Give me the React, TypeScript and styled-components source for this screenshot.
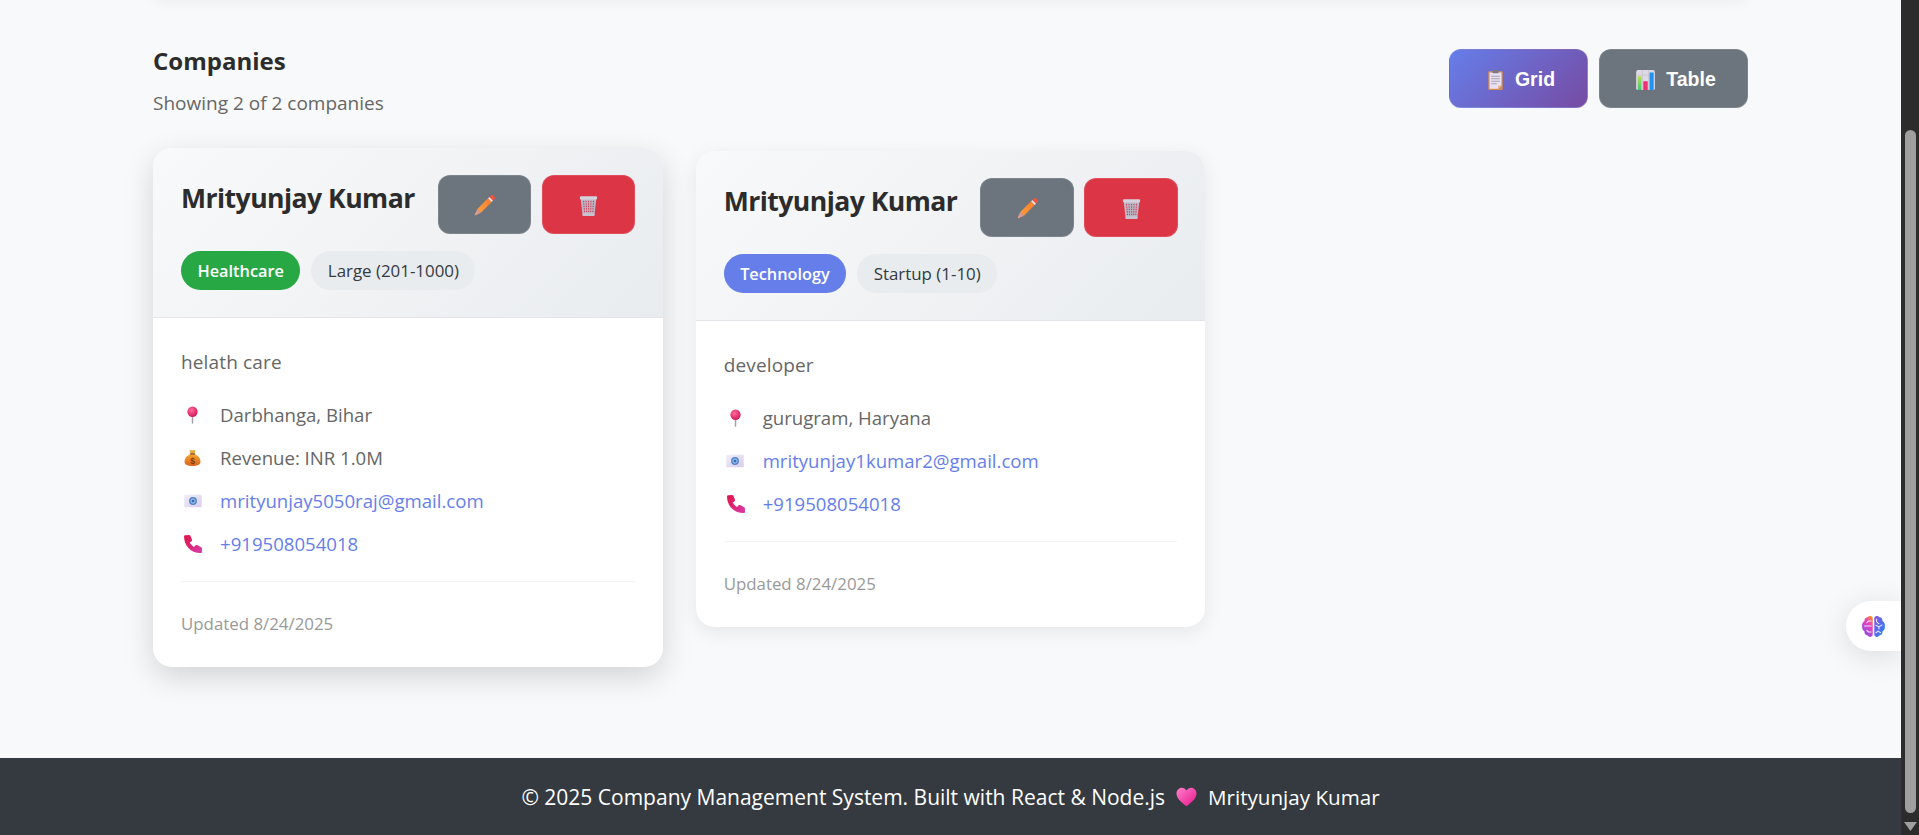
import React from "react";
import styled, { createGlobalStyle } from "styled-components";

const Global = createGlobalStyle`
  html, body { margin: 0; padding: 0; height: 100%; overflow: hidden; }
  body { font-family: "Open Sans", "Noto Sans", "Liberation Sans", sans-serif; background: #f8f9fa; }
  * { box-sizing: border-box; }
`;

const Page = styled.div`
  display: flex;
  height: 835px;
  width: 1919px;
`;
const Main = styled.div`
  position: relative;
  flex: 1;
  display: flex;
  flex-direction: column;
  min-width: 0;
  overflow: hidden;
`;
const Content = styled.main`
  flex: 1;
  padding: 0 153px;
`;
const TopPanelEdge = styled.div`
  height: 20px;
  margin-top: -20px;
  border-radius: 12px;
  background: #f3f4f5;
  box-shadow: 0 2px 14px rgba(0, 0, 0, 0.05);
`;
const SectionHeader = styled.header`
  display: flex;
  justify-content: space-between;
  align-items: flex-start;
  padding-top: 44px;
  margin-bottom: 35px;
`;
const Heading = styled.h2`
  margin: 0;
  font-size: 24px;
  line-height: 34px;
  font-weight: 700;
  color: #2c2c2c;
`;
const Subheading = styled.p`
  margin: 12px 0 0;
  font-size: 19px;
  line-height: 26px;
  color: #666;
`;
const ViewToggle = styled.div`
  display: flex;
  gap: 11px;
  margin-top: 5px;
`;
const ViewButton = styled.button<{ $active?: boolean }>`
  display: inline-flex;
  align-items: center;
  justify-content: center;
  gap: ${(p) => (p.$active ? "12px" : "11px")};
  height: 59px;
  width: ${(p) => (p.$active ? "139px" : "149px")};
  padding: 2px 0 0 ${(p) => (p.$active ? "6px" : "5px")};
  border-radius: 12px;
  border: 1px solid rgba(255, 255, 255, 0.12);
  background: ${(p) => (p.$active ? "linear-gradient(135deg, #667eea 0%, #764ba2 100%)" : "#6c757d")};
  color: #fff;
  font-family: "Liberation Sans", Arial, sans-serif;
  font-size: 19.5px;
  font-weight: 700;
`;
const CardGrid = styled.div`
  display: grid;
  grid-template-columns: repeat(3, 1fr);
  gap: 33px;
  align-items: start;
`;
const Card = styled.article<{ $lifted?: boolean }>`
  background: #fff;
  border-radius: 19px;
  overflow: hidden;
  transform: ${(p) => (p.$lifted ? "translateY(-3px)" : "none")};
  box-shadow: ${(p) => (p.$lifted ? "0 10px 30px rgba(0,0,0,0.15)" : "0 5px 20px rgba(0,0,0,0.08)")};
`;
const CardHeader = styled.div`
  padding: 27px 27.5px 27px 28px;
  background: linear-gradient(135deg, #f8f9fa 0%, #e9ecef 100%);
  border-bottom: 1px solid #e3e5e8;
`;
const TitleRow = styled.div`
  display: flex;
  justify-content: space-between;
  align-items: flex-start;
`;
const CardTitle = styled.h3`
  margin: 0;
  font-size: 26.6px;
  line-height: 46px;
  font-weight: 700;
  color: #2c2c2c;
  letter-spacing: -0.55px;
  white-space: nowrap;
`;
const Actions = styled.div`
  display: flex;
  gap: 10.5px;
`;
const IconButton = styled.button<{ $danger?: boolean }>`
  display: flex;
  align-items: center;
  justify-content: center;
  width: 93.5px;
  height: 59px;
  padding: 2px 0 0;
  border-radius: 12px;
  border: 1px solid rgba(255, 255, 255, 0.12);
  background: ${(p) => (p.$danger ? "#dc3545" : "#6c757d")};
`;
const Badges = styled.div`
  display: flex;
  gap: 11px;
  margin-top: 17px;
`;
const Badge = styled.span<{ $primary?: boolean; $bg: string }>`
  display: inline-flex;
  align-items: center;
  height: 39px;
  padding: 0 16.5px;
  border-radius: 20px;
  background: ${(p) => p.$bg};
  color: ${(p) => (p.$primary ? "#fff" : "#343a40")};
  font-size: ${(p) => (p.$primary ? "16.3px" : "16.9px")};
  font-weight: ${(p) => (p.$primary ? 600 : 400)};
  white-space: nowrap;
`;
const CardBody = styled.div`
  padding: 27px 28px 30px;
`;
const Description = styled.p`
  margin: 0 0 21px;
  font-size: 19px;
  line-height: 34px;
  color: #666;
  letter-spacing: 0.15px;
`;
const InfoList = styled.ul`
  list-style: none;
  margin: 0;
  padding: 0;
  display: flex;
  flex-direction: column;
  gap: 14px;
`;
const InfoRow = styled.li`
  display: flex;
  align-items: center;
  height: 29px;
  font-size: 18.6px;
  color: #666;
`;
const InfoIcon = styled.span`
  display: flex;
  justify-content: center;
  align-items: center;
  width: 39px;
  padding-right: 16px;
  flex: none;
`;
const InfoLink = styled.a`
  color: #667eea;
  text-decoration: none;
`;
const CardFooter = styled.div`
  margin-top: 23px;
  padding-top: 29px;
  border-top: 1px solid #f3f4f5;
  font-size: 16.85px;
  line-height: 26px;
  color: #999;
`;
const Footer = styled.footer`
  flex: none;
  height: 77px;
  display: flex;
  align-items: center;
  justify-content: center;
  gap: 10px;
  background: #343a40;
  color: #fff;
  font-size: 21px;
`;
const FooterName = styled.span`
  font-size: 20.6px;
`;
const FloatingTab = styled.div`
  position: absolute;
  right: 0;
  top: 601px;
  width: 55px;
  height: 50px;
  display: flex;
  align-items: center;
  padding-left: 15px;
  background: #fff;
  border-radius: 25px 0 0 25px;
  box-shadow: 0 5px 30px rgba(0, 0, 0, 0.12);
`;
const ScrollTrack = styled.div`
  position: relative;
  flex: none;
  width: 18px;
  height: 100%;
  background: #2c2c2c;
  display: flex;
  flex-direction: column;
  align-items: center;
  padding-top: 130px;
`;
const ScrollThumb = styled.div`
  width: 11px;
  height: 683px;
  background: #9f9f9f;
  border-radius: 6px;
`;
const ScrollArrow = styled.svg`
  margin-top: 9px;
`;

const PinIcon = () => (
  <svg width="13" height="18" viewBox="0 0 24 32">
    <defs>
      <radialGradient id="pinG" cx="0.4" cy="0.35" r="0.7">
        <stop offset="0" stopColor="#ff6c96" />
        <stop offset="1" stopColor="#d3125c" />
      </radialGradient>
    </defs>
    <rect x="10.6" y="14" width="2.8" height="18" rx="1.2" fill="#a6a2ac" />
    <circle cx="12" cy="10" r="9.5" fill="url(#pinG)" />
  </svg>
);

const BagIcon = () => (
  <svg width="17" height="18" viewBox="0 0 32 32">
    <defs>
      <linearGradient id="bagG" x1="0" y1="0" x2="0" y2="1">
        <stop offset="0" stopColor="#f9a62c" />
        <stop offset="1" stopColor="#d8621d" />
      </linearGradient>
    </defs>
    <path d="M11 9C5 12 1 17 1 22.500c0 6.500 7 8.500 15 8.500s15-2 15-8.500C31 17 27 12 21 9Z" fill="url(#bagG)" />
    <path d="M10 1.500h12l-2.500 6.500h-7Z" fill="#eaa43c" />
    <rect x="11" y="7" width="10" height="2.800" rx="1.200" fill="#8a5a22" />
    <text x="16" y="27" textAnchor="middle" fontSize="16" fontWeight="700" fontFamily="Liberation Sans, sans-serif" fill="#7c3d10">$</text>
  </svg>
);

const MailIcon = () => (
  <svg width="18" height="14" viewBox="0 0 32 24">
    <defs>
      <linearGradient id="mailG" x1="0" y1="0" x2="1" y2="1">
        <stop offset="0" stopColor="#f1edf9" />
        <stop offset="1" stopColor="#d9cdea" />
      </linearGradient>
    </defs>
    <rect x="0.5" y="1" width="31" height="22" rx="1.5" fill="url(#mailG)" />
    <circle cx="16" cy="12" r="7" fill="#4d84cc" />
    <circle cx="16" cy="12" r="3.8" fill="none" stroke="#c5d9f2" strokeWidth="1.4" />
    <circle cx="16" cy="12" r="1.6" fill="#2d63ae" />
  </svg>
);

const PhoneIcon = () => (
  <svg width="19" height="18" viewBox="0 0 32 32">
    <defs>
      <linearGradient id="phoneG" x1="0" y1="0" x2="1" y2="1">
        <stop offset="0" stopColor="#e01346" />
        <stop offset="1" stopColor="#d83cab" />
      </linearGradient>
    </defs>
    <path
      d="M1 3C1 1.400 2 .5 3.500.5L10 0c1 0 1.800.6 2.200 1.500l3 7c.4 1-.1 2-.9 2.600l-3.300 2.400c2 3.500 4.300 5.800 7.800 7.800l2.700-3c.8-.7 1.900-.9 2.800-.4l7 3.700c1 .5 1.600 1.400 1.500 2.500V30c0 1-.8 2-2 2H28C12 31 1 18 1 3Z"
      fill="url(#phoneG)"
    />
  </svg>
);

const PencilIcon = () => (
  <svg width="23" height="23" viewBox="0 0 32 32">
    <defs>
      <linearGradient id="penG" x1="0" y1="1" x2="1" y2="0">
        <stop offset="0" stopColor="#f9a03f" />
        <stop offset="1" stopColor="#fb7a2c" />
      </linearGradient>
    </defs>
    <path d="M6 21 21 6l5 5-15 15Z" fill="url(#penG)" />
    <path d="M6 21l5 5-7 3.500c-1 .4-1.900-.5-1.500-1.500Z" fill="#d99a8c" />
    <path d="M21 6l1.800-1.800 5 5L26 11Z" fill="#efe7ea" />
    <path d="M22.800 4.200 25 2c.8-.8 2-.8 2.800 0L30 4.200c.8.800.8 2 0 2.800l-2.200 2.200Z" fill="#f4533f" />
  </svg>
);

const TrashIcon = () => {
  const holes: [number, number][] = [];
  for (let r = 0; r < 5; r++) {
    for (let c = 0; c < 5; c++) {
      const inset = r * 0.35;
      holes.push([8.5 + inset + c * (3.75 - inset / 2.5), 10 + r * 3.7]);
    }
  }
  return (
    <svg width="21" height="21" viewBox="0 0 32 32">
      <path d="M4 5h24l-3 26a1 1 0 0 1-1 1H8a1 1 0 0 1-1-1Z" fill="#bdb8c6" />
      <rect x="3" y="2" width="26" height="5" rx="1.500" fill="#d6d2dd" />
      <rect x="7" y="28" width="18" height="3.500" fill="#c9c5d2" />
      {holes.map(([x, y], i) => (
        <ellipse key={i} cx={x} cy={y} rx="0.900" ry="1.300" fill="#cf3c55" />
      ))}
    </svg>
  );
};

const ClipboardIcon = () => (
  <svg width="15" height="20" viewBox="0 0 24 32">
    <rect x="0.500" y="2" width="23" height="30" rx="1.500" fill="#d68f50" />
    <path d="M2.500 4h19v21l-5 5h-14Z" fill="#e9e1f1" />
    <path d="M21.500 25h-5v5Z" fill="#e8a76c" />
    <rect x="7" y="0" width="10" height="5" rx="1.200" fill="#7d7886" />
    <g stroke="#a49dad" strokeWidth="1.500">
      <line x1="5" y1="10" x2="19" y2="10" />
      <line x1="5" y1="14" x2="19" y2="14" />
      <line x1="5" y1="18" x2="19" y2="18" />
      <line x1="5" y1="22" x2="14" y2="22" />
    </g>
  </svg>
);

const ChartIcon = () => (
  <svg width="19" height="20" viewBox="0 0 30 32">
    <defs>
      <linearGradient id="greenBar" x1="0" y1="0" x2="0" y2="1">
        <stop offset="0" stopColor="#b7e04f" />
        <stop offset="1" stopColor="#45c973" />
      </linearGradient>
    </defs>
    <rect x="0" y="0" width="30" height="32" rx="3" fill="#dcd8e4" />
    <g stroke="#c2bdcc" strokeWidth="1">
      <line x1="10" y1="0" x2="10" y2="32" />
      <line x1="20" y1="0" x2="20" y2="32" />
      <line x1="0" y1="8" x2="30" y2="8" />
    </g>
    <rect x="2.500" y="10" width="6" height="22" fill="url(#greenBar)" />
    <rect x="11.500" y="18" width="7" height="14" fill="#ee2f70" />
    <rect x="21.500" y="4" width="6.500" height="28" fill="#2193ee" />
  </svg>
);

const HeartIcon = () => (
  <svg width="23" height="20" viewBox="0 0 32 28">
    <defs>
      <linearGradient id="heartG" x1="0" y1="0" x2="1" y2="1">
        <stop offset="0" stopColor="#ff7fcb" />
        <stop offset="1" stopColor="#e8178d" />
      </linearGradient>
    </defs>
    <path d="M16 27C7 20 2 15 2 9c0-4.500 3.400-8 7.500-8 2.800 0 5.200 1.500 6.500 4 1.300-2.500 3.700-4 6.500-4C26.600 1 30 4.500 30 9c0 6-5 11-14 18Z" fill="url(#heartG)" />
  </svg>
);

const BrainIcon = () => (
  <svg width="25" height="25" viewBox="0 0 32 32">
    <defs>
      <linearGradient id="brainL" x1="0.800" y1="0" x2="0.200" y2="1">
        <stop offset="0" stopColor="#fb8c2e" />
        <stop offset="0.350" stopColor="#e83fbe" />
        <stop offset="1" stopColor="#7c55e8" />
      </linearGradient>
      <linearGradient id="brainR" x1="0" y1="0" x2="1" y2="1">
        <stop offset="0" stopColor="#8a52e6" />
        <stop offset="1" stopColor="#1f8af0" />
      </linearGradient>
    </defs>
    <path d="M15 5C14 2 10 2 8.500 4 6 4 4 6 4.500 9 2 10.500 1 13 1.500 16 1 19 2.500 21 4.500 22.500 4 25 6 27.500 8.500 27.500 10 30 14 30 15 27Z" fill="url(#brainL)" />
    <path d="M17 5C18 2 22 2 23.500 4 26 4 28 6 27.500 9 30 10.500 31 13 30.500 16 31 19 29.500 21 27.500 22.500 28 25 26 27.500 23.500 27.500 22 30 18 30 17 27Z" fill="url(#brainR)" />
    <g stroke="#f1e8fb" strokeWidth="1.300" fill="none" strokeLinecap="round">
      <path d="M13 9H9.500L7.500 11" />
      <path d="M4.500 15.500H13" />
      <path d="M13 23H9.500L7.500 21" />
      <path d="M20 6.500V10L23 12.500" />
      <path d="M19 14.500L23 16.500L27 14" />
      <path d="M23 16.500V19" />
      <path d="M19 24L22 22L25 24" />
    </g>
  </svg>
);

type Company = {
  name: string;
  industry: string;
  industryColor: string;
  size: string;
  description: string;
  location: string;
  revenue?: string;
  email: string;
  phone: string;
  updated: string;
  lifted?: boolean;
};

const companies: Company[] = [
  {
    name: "Mrityunjay Kumar",
    industry: "Healthcare",
    industryColor: "#28a745",
    size: "Large (201-1000)",
    description: "helath care",
    location: "Darbhanga, Bihar",
    revenue: "Revenue: INR 1.0M",
    email: "mrityunjay5050raj@gmail.com",
    phone: "+919508054018",
    updated: "Updated 8/24/2025",
    lifted: true,
  },
  {
    name: "Mrityunjay Kumar",
    industry: "Technology",
    industryColor: "#667eea",
    size: "Startup (1-10)",
    description: "developer",
    location: "gurugram, Haryana",
    email: "mrityunjay1kumar2@gmail.com",
    phone: "+919508054018",
    updated: "Updated 8/24/2025",
  },
];

const CompanyCard = ({ c }: { c: Company }) => (
  <Card $lifted={c.lifted}>
    <CardHeader>
      <TitleRow>
        <CardTitle>{c.name}</CardTitle>
        <Actions>
          <IconButton><PencilIcon /></IconButton>
          <IconButton $danger><TrashIcon /></IconButton>
        </Actions>
      </TitleRow>
      <Badges>
        <Badge $primary $bg={c.industryColor}>{c.industry}</Badge>
        <Badge $bg="#e9ecef">{c.size}</Badge>
      </Badges>
    </CardHeader>
    <CardBody>
      <Description>{c.description}</Description>
      <InfoList>
        <InfoRow><InfoIcon><PinIcon /></InfoIcon>{c.location}</InfoRow>
        {c.revenue && <InfoRow><InfoIcon><BagIcon /></InfoIcon>{c.revenue}</InfoRow>}
        <InfoRow><InfoIcon><MailIcon /></InfoIcon><InfoLink href="#">{c.email}</InfoLink></InfoRow>
        <InfoRow><InfoIcon><PhoneIcon /></InfoIcon><InfoLink href="#">{c.phone}</InfoLink></InfoRow>
      </InfoList>
      <CardFooter>{c.updated}</CardFooter>
    </CardBody>
  </Card>
);

export default function App() {
  return (
    <Page>
      <Global />
      <Main>
        <Content>
          <TopPanelEdge />
          <SectionHeader>
            <div>
              <Heading>Companies</Heading>
              <Subheading>Showing 2 of 2 companies</Subheading>
            </div>
            <ViewToggle>
              <ViewButton $active><ClipboardIcon />Grid</ViewButton>
              <ViewButton><ChartIcon />Table</ViewButton>
            </ViewToggle>
          </SectionHeader>
          <CardGrid>
            {companies.map((c) => (
              <CompanyCard key={c.email} c={c} />
            ))}
          </CardGrid>
        </Content>
        <Footer>
          <span>© 2025 Company Management System. Built with React &amp; Node.js</span>
          <HeartIcon />
          <FooterName>Mrityunjay Kumar</FooterName>
        </Footer>
        <FloatingTab><BrainIcon /></FloatingTab>
      </Main>
      <ScrollTrack>
        <ScrollThumb />
        <ScrollArrow width="13" height="9" viewBox="0 0 13 9">
          <path d="M0 0h13L6.500 9Z" fill="#9f9f9f" />
        </ScrollArrow>
      </ScrollTrack>
    </Page>
  );
}
